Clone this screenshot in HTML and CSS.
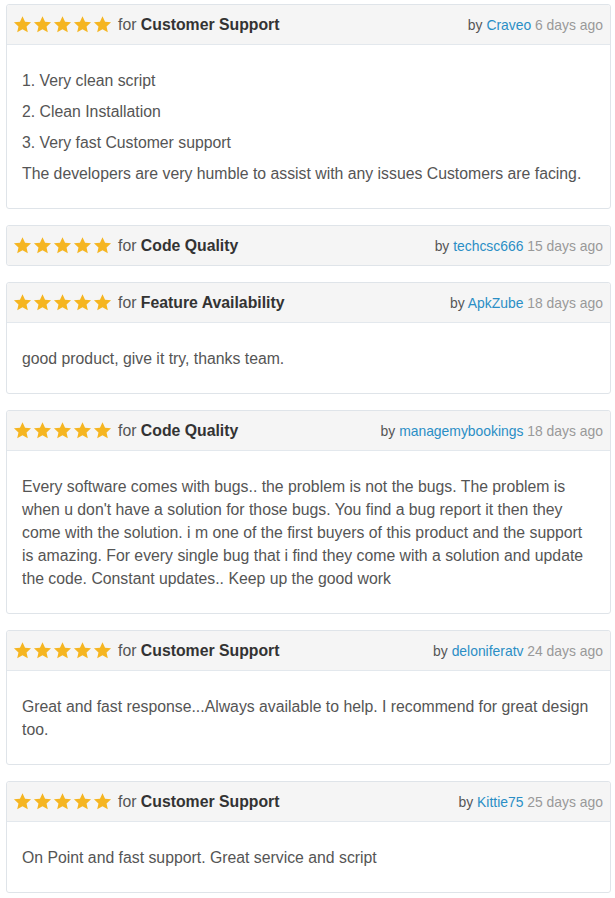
FILE: index.html
```html
<!DOCTYPE html>
<html>
<head>
<meta charset="utf-8">
<link rel="stylesheet" href="styles.css">
</head>
<body>
<svg width="0" height="0" class="defs">
  <defs>
    <symbol id="star" viewBox="0 0 24 24">
      <path d="M12 1.5l3.2 7 7.6.8-5.7 5.1 1.6 7.5L12 18.1 5.3 21.9l1.6-7.5-5.7-5.1 7.6-.8z" fill="#f5b521"/>
    </symbol>
  </defs>
</svg>
<div class="list">
  <div class="card">
    <div class="head">
      <div class="rating">
        <span class="stars"><svg><use href="#star"/></svg><svg><use href="#star"/></svg><svg><use href="#star"/></svg><svg><use href="#star"/></svg><svg><use href="#star"/></svg></span>
        <span class="for">for <b>Customer Support</b></span>
      </div>
      <div class="meta">by <a>Craveo</a> <span class="ago">6 days ago</span></div>
    </div>
    <div class="body">
      <p>1. Very clean script</p>
      <p>2. Clean Installation</p>
      <p>3. Very fast Customer support</p>
      <p>The developers are very humble to assist with any issues Customers are facing.</p>
    </div>
  </div>

  <div class="card">
    <div class="head last">
      <div class="rating">
        <span class="stars"><svg><use href="#star"/></svg><svg><use href="#star"/></svg><svg><use href="#star"/></svg><svg><use href="#star"/></svg><svg><use href="#star"/></svg></span>
        <span class="for">for <b>Code Quality</b></span>
      </div>
      <div class="meta">by <a>techcsc666</a> <span class="ago">15 days ago</span></div>
    </div>
  </div>

  <div class="card">
    <div class="head">
      <div class="rating">
        <span class="stars"><svg><use href="#star"/></svg><svg><use href="#star"/></svg><svg><use href="#star"/></svg><svg><use href="#star"/></svg><svg><use href="#star"/></svg></span>
        <span class="for">for <b>Feature Availability</b></span>
      </div>
      <div class="meta">by <a>ApkZube</a> <span class="ago">18 days ago</span></div>
    </div>
    <div class="body">
      <p>good product, give it try, thanks team.</p>
    </div>
  </div>

  <div class="card">
    <div class="head">
      <div class="rating">
        <span class="stars"><svg><use href="#star"/></svg><svg><use href="#star"/></svg><svg><use href="#star"/></svg><svg><use href="#star"/></svg><svg><use href="#star"/></svg></span>
        <span class="for">for <b>Code Quality</b></span>
      </div>
      <div class="meta">by <a>managemybookings</a> <span class="ago">18 days ago</span></div>
    </div>
    <div class="body">
      <p>Every software comes with bugs.. the problem is not the bugs. The problem is when u don't have a solution for those bugs. You find a bug report it then they come with the solution. i m one of the first buyers of this product and the support is amazing. For every single bug that i find they come with a solution and update the code. Constant updates.. Keep up the good work</p>
    </div>
  </div>

  <div class="card">
    <div class="head">
      <div class="rating">
        <span class="stars"><svg><use href="#star"/></svg><svg><use href="#star"/></svg><svg><use href="#star"/></svg><svg><use href="#star"/></svg><svg><use href="#star"/></svg></span>
        <span class="for">for <b>Customer Support</b></span>
      </div>
      <div class="meta">by <a>deloniferatv</a> <span class="ago">24 days ago</span></div>
    </div>
    <div class="body">
      <p>Great and fast response...Always available to help. I recommend for great design too.</p>
    </div>
  </div>

  <div class="card">
    <div class="head">
      <div class="rating">
        <span class="stars"><svg><use href="#star"/></svg><svg><use href="#star"/></svg><svg><use href="#star"/></svg><svg><use href="#star"/></svg><svg><use href="#star"/></svg></span>
        <span class="for">for <b>Customer Support</b></span>
      </div>
      <div class="meta">by <a>Kittie75</a> <span class="ago">25 days ago</span></div>
    </div>
    <div class="body">
      <p>On Point and fast support. Great service and script</p>
    </div>
  </div>
</div>
</body>
</html>
```

FILE: styles.css
```css
html, body {
  margin: 0;
  padding: 0;
  background: #ffffff;
}
body {
  font-family: "Liberation Sans", Arial, sans-serif;
  color: #555555;
}
.defs {
  position: absolute;
  width: 0;
  height: 0;
  overflow: hidden;
}
.list {
  display: flex;
  flex-direction: column;
  gap: 16px;
  padding: 4px 4px 0 6px;
}
.card {
  border: 1px solid #dfe4e9;
  border-radius: 3px;
  background: #ffffff;
}
.head {
  display: flex;
  justify-content: space-between;
  align-items: center;
  height: 39px;
  padding: 0 7px 0 6px;
  background: #f5f5f5;
  border-bottom: 1px solid #e3e8ed;
  border-radius: 3px 3px 0 0;
}
.head.last {
  border-bottom: none;
  border-radius: 3px;
}
.rating {
  display: flex;
  align-items: center;
}
.stars {
  display: flex;
  gap: 1px;
  margin-right: 6px;
}
.stars svg {
  width: 19px;
  height: 19px;
  display: block;
}
.for {
  font-size: 15.8px;
  color: #555555;
}
.for b {
  color: #333333;
  font-weight: bold;
}
.meta {
  font-size: 13.9px;
  color: #555555;
}
.meta a {
  color: #2a8ec5;
  text-decoration: none;
}
.meta .ago {
  color: #999999;
}
.body {
  padding: 24px 15px 15px 15px;
  font-size: 15.8px;
  line-height: 23px;
}
.body p {
  margin: 0 0 8px 0;
}
```
